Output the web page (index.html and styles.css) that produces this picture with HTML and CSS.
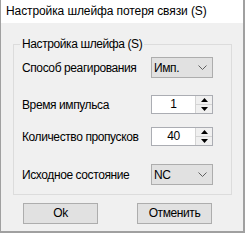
FILE: index.html
```html
<!DOCTYPE html>
<html lang="ru">
<head>
<meta charset="utf-8">
<link rel="stylesheet" href="styles.css">
</head>
<body>
<div class="window">
  <div class="titlebar">Настройка шлейфа потеря связи (S)</div>
  <div class="client">
    <div class="group">
      <span class="legend">Настройка шлейфа (S)</span>
      <div class="row r1">
        <span class="label">Способ реагирования</span>
        <div class="combo"><span>Имп.</span><svg class="chev" width="9" height="5" viewBox="0 0 9 5"><polyline points="0.5,0.5 4.5,4.5 8.5,0.5" fill="none" stroke="#606060" stroke-width="1"/></svg></div>
      </div>
      <div class="row r2">
        <span class="label">Время импульса</span>
        <div class="spin"><span class="val">1</span><div class="btns"><div class="up"><svg width="7" height="4" viewBox="0 0 7 4"><polygon points="0,4 3.5,0 7,4" fill="#000"/></svg></div><div class="down"><svg width="7" height="4" viewBox="0 0 7 4"><polygon points="0,0 3.5,4 7,0" fill="#000"/></svg></div></div></div>
      </div>
      <div class="row r3">
        <span class="label">Количество пропусков</span>
        <div class="spin"><span class="val">40</span><div class="btns"><div class="up"><svg width="7" height="4" viewBox="0 0 7 4"><polygon points="0,4 3.5,0 7,4" fill="#000"/></svg></div><div class="down"><svg width="7" height="4" viewBox="0 0 7 4"><polygon points="0,0 3.5,4 7,0" fill="#000"/></svg></div></div></div>
      </div>
      <div class="row r4">
        <span class="label">Исходное состояние</span>
        <div class="combo"><span>NC</span><svg class="chev" width="9" height="5" viewBox="0 0 9 5"><polyline points="0.5,0.5 4.5,4.5 8.5,0.5" fill="none" stroke="#606060" stroke-width="1"/></svg></div>
      </div>
    </div>
    <div class="buttons">
      <div class="btn ok">Ok</div>
      <div class="btn cancel">Отменить</div>
    </div>
  </div>
</div>
</body>
</html>
```
FILE: styles.css
```css
html, body {
  margin: 0;
  padding: 0;
  background: #f0f0f0;
}
body {
  font-family: "Liberation Sans", Arial, sans-serif;
  font-size: 12px;
  letter-spacing: -0.4px;
  color: #000;
}
.window {
  width: 245px;
  height: 233px;
  box-sizing: border-box;
  border-left: 1px solid #a0a0a0;
  border-right: 2px solid #a0a0a0;
  border-bottom: 2px solid #a0a0a0;
  background: #f0f0f0;
  display: flex;
  flex-direction: column;
}
.titlebar {
  height: 23px;
  background: #fff;
  padding-left: 5px;
  line-height: 23px;
  font-size: 12px;
  letter-spacing: -0.1px;
  white-space: nowrap;
}
.client {
  padding: 21px 0 0 12px;
}
.group {
  position: relative;
  width: 219px;
  height: 151px;
  box-sizing: border-box;
  border: 1px solid #dcdcdc;
  padding: 12px 0 0 8px;
}
.legend {
  position: absolute;
  left: 6px;
  top: -8px;
  padding: 0 2px;
  background: #f0f0f0;
  line-height: 14px;
}
.row {
  display: flex;
  align-items: center;
}
.label {
  width: 129px;
  white-space: nowrap;
}
.r2 { margin-top: 17px; }
.r3 { margin-top: 13px; }
.r4 { margin-top: 18px; }
.combo {
  width: 62px;
  height: 21px;
  box-sizing: border-box;
  background: #e1e1e1;
  border: 1px solid #adadad;
  display: flex;
  align-items: center;
  justify-content: space-between;
  padding: 0 5px 0 2px;
}
.chev { display: block; }
.spin {
  width: 62px;
  height: 19px;
  box-sizing: border-box;
  background: #fff;
  border: 1px solid #abadb3;
  display: flex;
}
.val {
  flex: 1;
  text-align: center;
  line-height: 17px;
}
.btns {
  width: 16px;
  display: flex;
  flex-direction: column;
  border-left: 1px solid #d4d4d4;
}
.up, .down {
  flex: 1;
  display: flex;
  align-items: center;
  justify-content: center;
  background: #f0f0f0;
}
.up { border-bottom: 1px solid #d4d4d4; }
.buttons {
  display: flex;
  padding: 8px 0 0 10px;
}
.btn {
  width: 75px;
  height: 21px;
  box-sizing: border-box;
  background: #e1e1e1;
  border: 1px solid #adadad;
  text-align: center;
  line-height: 19px;
}
.cancel { margin-left: 39px; }
```
